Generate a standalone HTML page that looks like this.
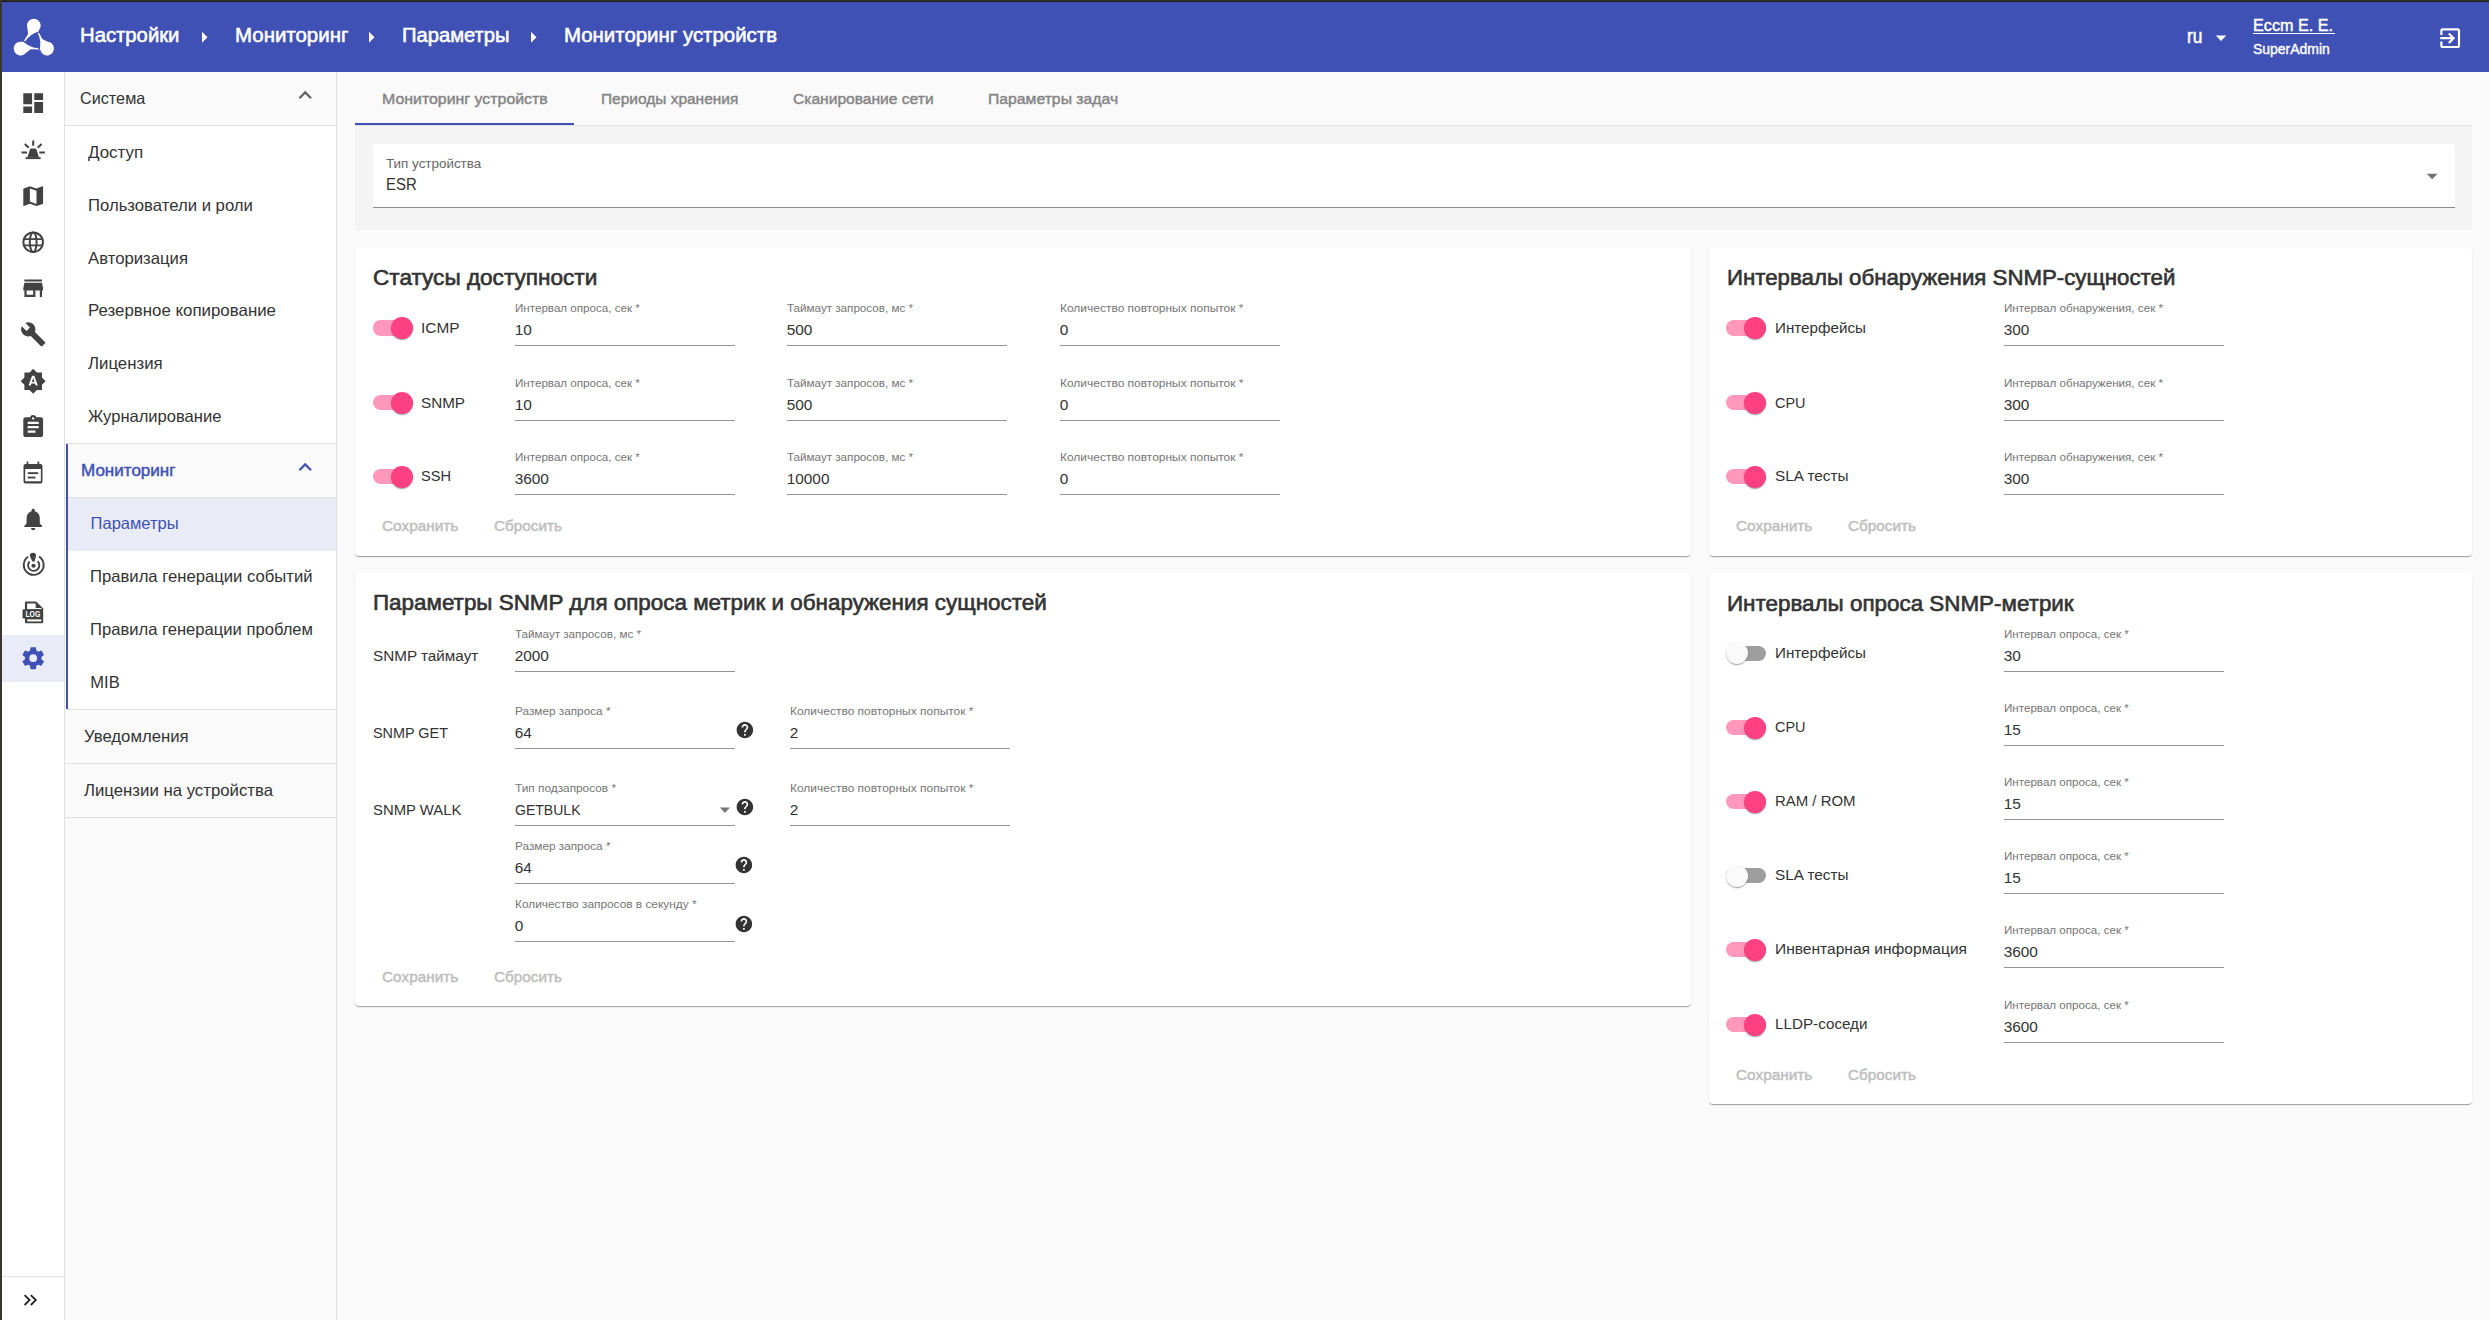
<!DOCTYPE html><html><head><meta charset="utf-8"><style>html,body{margin:0;padding:0;width:2489px;height:1320px;overflow:hidden;}body{position:relative;font-family:"Liberation Sans", sans-serif;}</style></head><body><div style="position:absolute;left:0px;top:0px;width:2489px;height:1320px;background:#fafafa;"></div>
<div style="position:absolute;left:0px;top:0px;width:2489px;height:72px;background:#3f51b5;"></div>
<div style="position:absolute;left:0px;top:0px;width:2489px;height:1px;background:#303030;"></div>
<div style="position:absolute;left:0px;top:1px;width:2489px;height:1px;background:#1b1a16;"></div>
<div style="position:absolute;left:2px;top:72px;width:62px;height:1248px;background:#ffffff;"></div>
<div style="position:absolute;left:64px;top:72px;width:1px;height:1248px;background:#e0e0e0;"></div>
<div style="position:absolute;left:2px;top:635px;width:62px;height:47px;background:#e9ecf6;"></div>
<div style="position:absolute;left:2px;top:1276px;width:62px;height:1px;background:#e0e0e0;"></div>
<div style="position:absolute;left:65px;top:72px;width:271px;height:1248px;background:#fafafa;"></div>
<div style="position:absolute;left:336px;top:72px;width:1px;height:1248px;background:#e0e0e0;"></div>
<div style="position:absolute;left:0px;top:0px;width:1px;height:1320px;background:#3a3632;"></div>
<div style="position:absolute;left:1px;top:0px;width:1px;height:1320px;background:#3d3428;"></div>
<svg style="position:absolute;left:0;top:0" width="70" height="70" viewBox="0 0 70 70" fill="#fff"><g transform="translate(33.8 40.9)"><g transform="rotate(0)"><circle cx="0" cy="-15.3" r="6.9"/><path d="M-6.3 -12.6 L-5.7 -6.8 L-9.8 -0.1 L-8.5 0.3 Q-4.8 -6.4 5.7 -10 Z"/></g><g transform="rotate(120)"><circle cx="0" cy="-15.3" r="6.9"/><path d="M-6.3 -12.6 L-5.7 -6.8 L-9.8 -0.1 L-8.5 0.3 Q-4.8 -6.4 5.7 -10 Z"/></g><g transform="rotate(240)"><circle cx="0" cy="-15.3" r="6.9"/><path d="M-6.3 -12.6 L-5.7 -6.8 L-9.8 -0.1 L-8.5 0.3 Q-4.8 -6.4 5.7 -10 Z"/></g></g></svg>
<div id="t0" style="position:absolute;left:80px;top:26.37px;font-size:19.80px;line-height:1;white-space:nowrap;color:#fff;font-weight:400;-webkit-text-stroke:0.55px #fff;transform:scaleX(1.0247);transform-origin:0 0;">Настройки</div>
<div id="t1" style="position:absolute;left:234.5px;top:26.37px;font-size:19.80px;line-height:1;white-space:nowrap;color:#fff;font-weight:400;-webkit-text-stroke:0.55px #fff;transform:scaleX(1.0336);transform-origin:0 0;">Мониторинг</div>
<div id="t2" style="position:absolute;left:401.6px;top:26.37px;font-size:19.80px;line-height:1;white-space:nowrap;color:#fff;font-weight:400;-webkit-text-stroke:0.55px #fff;transform:scaleX(1.0194);transform-origin:0 0;">Параметры</div>
<div id="t3" style="position:absolute;left:564.2px;top:26.37px;font-size:19.80px;line-height:1;white-space:nowrap;color:#fff;font-weight:400;-webkit-text-stroke:0.55px #fff;transform:scaleX(1.0323);transform-origin:0 0;">Мониторинг устройств</div>
<svg style="position:absolute;left:191px;top:24.05px" width="26.4" height="26.4" viewBox="0 0 24 24" fill="#fff"><path d="M10 17l5-5-5-5v10z"/></svg>
<svg style="position:absolute;left:358.2px;top:24.05px" width="26.4" height="26.4" viewBox="0 0 24 24" fill="#fff"><path d="M10 17l5-5-5-5v10z"/></svg>
<svg style="position:absolute;left:520.3px;top:24.05px" width="26.4" height="26.4" viewBox="0 0 24 24" fill="#fff"><path d="M10 17l5-5-5-5v10z"/></svg>
<div id="t4" style="position:absolute;left:2186.6px;top:27.41px;font-size:19.40px;line-height:1;white-space:nowrap;color:#fff;font-weight:400;-webkit-text-stroke:0.54px #fff;transform:scaleX(0.8928);transform-origin:0 0;">ru</div>
<svg style="position:absolute;left:0;top:0" width="2489" height="72"><polygon points="2215.8,35.6 2226.3,35.6 2221.05,41.1" fill="#fff"/></svg>
<div id="t5" style="position:absolute;left:2252.6px;top:18.09px;font-size:16.60px;line-height:1;white-space:nowrap;color:#fff;font-weight:400;-webkit-text-stroke:0.46px #fff;transform:scaleX(0.9749);transform-origin:0 0;">Eccm E. E.</div>
<div style="position:absolute;left:2252.5px;top:33px;width:82px;height:1.2px;background:#fff;"></div>
<div id="t6" style="position:absolute;left:2253px;top:41.55px;font-size:14.30px;line-height:1;white-space:nowrap;color:#fff;font-weight:400;-webkit-text-stroke:0.40px #fff;transform:scaleX(0.9760);transform-origin:0 0;">SuperAdmin</div>
<svg style="position:absolute;left:2437.3px;top:24.65px" width="26.4" height="26.4" viewBox="0 0 24 24" fill="#fff"><path d="M10.09 15.59L11.5 17l5-5-5-5-1.41 1.41L12.67 11H3v2h9.67l-2.58 2.59zM19 3H5c-1.11 0-2 .9-2 2v4h2V5h14v14H5v-4H3v4c0 1.1.89 2 2 2h14c1.1 0 2-.9 2-2V5c0-1.1-.9-2-2-2z"/></svg>
<svg style="position:absolute;left:19.6px;top:90.4px" width="26.4" height="26.4" viewBox="0 0 24 24" fill="#424242"><path d="M3 13h8V3H3v10zm0 8h8v-6H3v6zm10 0h8V11h-8v10zm0-18v6h8V3h-8z"/></svg>
<svg style="position:absolute;left:19.6px;top:136.6px" width="26.4" height="26.4" viewBox="0 0 24 24" fill="#424242"><g stroke="#424242" stroke-width="1.8" fill="none"><path d="M12 3.1v4.9M4.4 6.4l3.5 3.4M19.6 6.4l-3.5 3.4M1.4 14.1h5M17.6 14.1h5"/></g><path d="M10.2 10.4h3.6q0.9 0 1.2 0.9L17.2 18.4H6.8L9 11.3q0.3-0.9 1.2-0.9z"/><rect x="5.2" y="18.3" width="13.6" height="1.8"/></svg>
<svg style="position:absolute;left:19.6px;top:182.8px" width="26.4" height="26.4" viewBox="0 0 24 24" fill="#424242"><path d="M20.5 3l-.16.03L15 5.1 9 3 3.36 4.9c-.21.07-.36.25-.36.48V20.5c0 .28.22.5.5.5l.16-.03L9 18.9l6 2.1 5.64-1.9c.21-.07.36-.25.36-.48V3.5c0-.28-.22-.5-.5-.5zM15 19l-6-2.11V5l6 2.11V19z"/></svg>
<svg style="position:absolute;left:19.6px;top:229.0px" width="26.4" height="26.4" viewBox="0 0 24 24" fill="#424242"><g stroke="#424242" stroke-width="1.8" fill="none"><circle cx="12" cy="12" r="8.9"/><ellipse cx="12" cy="12" rx="3.1" ry="8.9"/><path d="M3.3 9.2h17.4M3.3 14.9h17.4"/></g></svg>
<svg style="position:absolute;left:19.6px;top:275.2px" width="26.4" height="26.4" viewBox="0 0 24 24" fill="#424242"><path d="M20 4H4v2h16V4zm1 10v-2l-1-5H4l-1 5v2h1v6h10v-6h4v6h2v-6h1zm-9 4H6v-4h6v4z"/></svg>
<svg style="position:absolute;left:19.6px;top:321.4px" width="26.4" height="26.4" viewBox="0 0 24 24" fill="#424242"><path d="M22.7 19l-9.1-9.1c.9-2.3.4-5-1.5-6.9-2-2-5-2.4-7.4-1.3L9 6 6 9 1.6 4.7C.4 7.1.9 10.1 2.9 12.1c1.9 1.9 4.6 2.4 6.9 1.5l9.1 9.1c.4.4 1 .4 1.4 0l2.3-2.3c.5-.4.5-1.1.1-1.4z"/></svg>
<svg style="position:absolute;left:19.6px;top:367.6px" width="26.4" height="26.4" viewBox="0 0 24 24" fill="#424242"><path d="M10.85 12.65h2.3L12 9l-1.15 3.65zM20 8.69V4h-4.69L12 .69 8.69 4H4v4.69L.69 12 4 15.31V20h4.69L12 23.31 15.31 20H20v-4.69L23.31 12 20 8.69zM14.3 16l-.7-2h-3.2l-.7 2H7.8L11 7h2l3.2 9h-1.9z"/></svg>
<svg style="position:absolute;left:19.6px;top:413.8px" width="26.4" height="26.4" viewBox="0 0 24 24" fill="#424242"><path d="M19 3h-4.18C14.4 1.840 13.3 1 12 1c-1.3 0-2.4.84-2.82 2H5c-1.1 0-2 .9-2 2v14c0 1.1.9 2 2 2h14c1.1 0 2-.9 2-2V5c0-1.1-.9-2-2-2zm-7 0c.55 0 1 .45 1 1s-.45 1-1 1-1-.45-1-1 .45-1 1-1zm2 14H7v-2h7v2zm3-4H7v-2h10v2zm0-4H7V7h10v2z"/></svg>
<svg style="position:absolute;left:19.6px;top:460.0px" width="26.4" height="26.4" viewBox="0 0 24 24" fill="#424242"><path fill-rule="evenodd" d="M5 3.55H18.65Q20.45 3.55 20.45 5.35V19.6Q20.45 21.4 18.65 21.4H5Q3.2 21.4 3.2 19.6V5.35Q3.2 3.55 5 3.55ZM4.7 8.2V19.4H18.95V8.2Z"/><rect x="6" y="1.4" width="1.6" height="2.4"/><rect x="15.9" y="1.4" width="1.6" height="2.4"/><rect x="7" y="11.1" width="9.5" height="1.7"/><rect x="7" y="15.1" width="7" height="1.7"/></svg>
<svg style="position:absolute;left:19.6px;top:506.2px" width="26.4" height="26.4" viewBox="0 0 24 24" fill="#424242"><path d="M12 22c1.1 0 2-.9 2-2h-4c0 1.1.89 2 2 2zm6-6v-5c0-3.07-1.64-5.64-4.5-6.32V4c0-.83-.67-1.5-1.5-1.5s-1.5.67-1.5 1.5v.68C7.630 5.36 6 7.92 6 11v5l-2 2v1h16v-1l-2-2z"/></svg>
<svg style="position:absolute;left:19.6px;top:552.4px" width="26.4" height="26.4" viewBox="0 0 24 24" fill="#424242"><g stroke="#424242" stroke-width="1.7" fill="none"><path d="M7.36 4.32A9.05 9.05 0 1 0 17.36 4.2"/><path d="M8.73 8.54A5.1 5.1 0 1 0 15.9 8.27"/></g><circle cx="12.27" cy="12.5" r="1.9"/><path d="M8.9 3.3Q8.9 0.64 11.75 0.64Q14.6 0.64 14.6 3.3L13.3 8.64H11.2Z"/></svg>
<svg style="position:absolute;left:19.6px;top:598.6px" width="26.4" height="26.4" viewBox="0 0 24 24" fill="#424242"><path d="M5.6 2.36H14.8L21.1 8.6V21Q21.1 22.1 20 22.1H5.6Q4.5 22.1 4.5 21V3.46Q4.5 2.36 5.6 2.36Z"/><path fill="#fff" d="M6.45 4.1H14.25V8.1H19.45V9.4H6.45Z"/><rect fill="#fff" x="6.5" y="18.55" width="12.95" height="1.85"/><path d="M3.4 9.3H19.5V17.8H3.4Q2.3 17.8 2.3 16.7V10.4Q2.3 9.3 3.4 9.3Z"/><text x="4.9" y="16.5" fill="#fff" font-family="Liberation Sans" font-weight="700" font-size="7.7" textLength="13.6" lengthAdjust="spacingAndGlyphs">LOG</text></svg>
<svg style="position:absolute;left:19.6px;top:644.8px" width="26.4" height="26.4" viewBox="0 0 24 24" fill="#3f51b5"><path d="M12,15.5A3.5,3.5 0 0,1 8.5,12A3.5,3.5 0 0,1 12,8.5A3.5,3.5 0 0,1 15.5,12A3.5,3.5 0 0,1 12,15.5M19.43,12.97C19.47,12.65 19.5,12.33 19.5,12C19.5,11.67 19.47,11.34 19.43,11L21.54,9.37C21.73,9.22 21.78,8.95 21.66,8.73L19.66,5.27C19.54,5.05 19.27,4.96 19.05,5.05L16.56,6.05C16.04,5.66 15.5,5.32 14.87,5.07L14.5,2.42C14.46,2.18 14.25,2 14,2H10C9.75,2 9.54,2.18 9.5,2.42L9.13,5.07C8.5,5.32 7.96,5.66 7.44,6.05L4.95,5.05C4.73,4.96 4.46,5.05 4.34,5.27L2.34,8.73C2.21,8.95 2.27,9.22 2.46,9.37L4.57,11C4.53,11.34 4.5,11.67 4.5,12C4.5,12.33 4.53,12.650 4.57,12.97L2.46,14.63C2.27,14.78 2.21,15.05 2.34,15.27L4.34,18.73C4.46,18.95 4.73,19.03 4.95,18.95L7.44,17.94C7.96,18.34 8.5,18.68 9.13,18.93L9.5,21.58C9.54,21.82 9.75,22 10,22H14C14.25,22 14.46,21.82 14.5,21.58L14.87,18.93C15.5,18.67 16.04,18.34 16.56,17.94L19.05,18.95C19.27,19.03 19.54,18.95 19.66,18.73L21.66,15.27C21.78,15.05 21.73,14.78 21.54,14.63L19.43,12.97Z"/></svg>
<svg style="position:absolute;left:0;top:1280" width="64" height="40"><g stroke="#222" stroke-width="1.8" fill="none"><path d="M24.6 15.2L29.6 20.1L24.6 25"/><path d="M30.8 15.2L35.8 20.1L30.8 25"/></g></svg>
<div style="position:absolute;left:65px;top:126px;width:271px;height:317px;background:#ffffff;"></div>
<div style="position:absolute;left:65px;top:125px;width:271px;height:1px;background:#e0e0e0;"></div>
<div style="position:absolute;left:65px;top:443px;width:271px;height:1px;background:#e0e0e0;"></div>
<div style="position:absolute;left:65px;top:497px;width:271px;height:1px;background:#e0e0e0;"></div>
<div style="position:absolute;left:68px;top:498px;width:268px;height:211px;background:#ffffff;"></div>
<div style="position:absolute;left:68px;top:498px;width:268px;height:53px;background:#e9ecf6;"></div>
<div style="position:absolute;left:65px;top:709px;width:271px;height:1px;background:#e0e0e0;"></div>
<div style="position:absolute;left:65px;top:763px;width:271px;height:1px;background:#e0e0e0;"></div>
<div style="position:absolute;left:65px;top:817px;width:271px;height:1px;background:#e0e0e0;"></div>
<div style="position:absolute;left:66px;top:444px;width:2.2px;height:265px;background:#3f51b5;"></div>
<div id="t7" style="position:absolute;left:79.5px;top:89.88px;font-size:16.50px;line-height:1;white-space:nowrap;color:#333333;font-weight:400;transform:scaleX(0.9826);transform-origin:0 0;">Система</div>
<svg style="position:absolute;left:291.9px;top:82.1px" width="26.4" height="26.4" viewBox="0 0 24 24" fill="#616161"><path d="M12 8l-6 6 1.41 1.41L12 10.83l4.59 4.58L18 14z"/></svg>
<div id="t8" style="position:absolute;left:88px;top:143.97px;font-size:16.50px;line-height:1;white-space:nowrap;color:#333333;font-weight:400;transform:scaleX(1.0276);transform-origin:0 0;">Доступ</div>
<div id="t9" style="position:absolute;left:88px;top:196.78px;font-size:16.50px;line-height:1;white-space:nowrap;color:#333333;font-weight:400;transform:scaleX(1.0121);transform-origin:0 0;">Пользователи и роли</div>
<div id="t10" style="position:absolute;left:88px;top:249.58px;font-size:16.50px;line-height:1;white-space:nowrap;color:#333333;font-weight:400;transform:scaleX(1.0131);transform-origin:0 0;">Авторизация</div>
<div id="t11" style="position:absolute;left:88px;top:302.38px;font-size:16.50px;line-height:1;white-space:nowrap;color:#333333;font-weight:400;transform:scaleX(1.0217);transform-origin:0 0;">Резервное копирование</div>
<div id="t12" style="position:absolute;left:88px;top:355.18px;font-size:16.50px;line-height:1;white-space:nowrap;color:#333333;font-weight:400;transform:scaleX(1.0187);transform-origin:0 0;">Лицензия</div>
<div id="t13" style="position:absolute;left:88px;top:407.98px;font-size:16.50px;line-height:1;white-space:nowrap;color:#333333;font-weight:400;transform:scaleX(1.0027);transform-origin:0 0;">Журналирование</div>
<div id="t14" style="position:absolute;left:81.4px;top:462.18px;font-size:16.50px;line-height:1;white-space:nowrap;color:#3f51b5;font-weight:400;-webkit-text-stroke:0.46px #3f51b5;transform:scaleX(1.0326);transform-origin:0 0;">Мониторинг</div>
<svg style="position:absolute;left:292.3px;top:453.9px" width="26.4" height="26.4" viewBox="0 0 24 24" fill="#3f51b5"><path d="M12 8l-6 6 1.41 1.41L12 10.83l4.59 4.58L18 14z"/></svg>
<div id="t15" style="position:absolute;left:90.6px;top:515.38px;font-size:16.50px;line-height:1;white-space:nowrap;color:#3f51b5;font-weight:400;">Параметры</div>
<div id="t16" style="position:absolute;left:90.2px;top:568.18px;font-size:16.50px;line-height:1;white-space:nowrap;color:#333333;font-weight:400;transform:scaleX(1.0093);transform-origin:0 0;">Правила генерации событий</div>
<div id="t17" style="position:absolute;left:90.2px;top:620.98px;font-size:16.50px;line-height:1;white-space:nowrap;color:#333333;font-weight:400;transform:scaleX(1.0060);transform-origin:0 0;">Правила генерации проблем</div>
<div id="t18" style="position:absolute;left:90.3px;top:673.77px;font-size:16.50px;line-height:1;white-space:nowrap;color:#333333;font-weight:400;">MIB</div>
<div id="t19" style="position:absolute;left:84.2px;top:727.77px;font-size:16.50px;line-height:1;white-space:nowrap;color:#333333;font-weight:400;transform:scaleX(1.0138);transform-origin:0 0;">Уведомления</div>
<div id="t20" style="position:absolute;left:84.2px;top:781.58px;font-size:16.50px;line-height:1;white-space:nowrap;color:#333333;font-weight:400;transform:scaleX(1.0158);transform-origin:0 0;">Лицензии на устройства</div>
<div id="t21" style="position:absolute;left:381.8px;top:91.11px;font-size:15.40px;line-height:1;white-space:nowrap;color:#858585;font-weight:400;-webkit-text-stroke:0.43px #858585;transform:scaleX(1.0327);transform-origin:0 0;">Мониторинг устройств</div>
<div id="t22" style="position:absolute;left:601.2px;top:91.11px;font-size:15.40px;line-height:1;white-space:nowrap;color:#858585;font-weight:400;-webkit-text-stroke:0.43px #858585;transform:scaleX(1.0049);transform-origin:0 0;">Периоды хранения</div>
<div id="t23" style="position:absolute;left:792.7px;top:91.11px;font-size:15.40px;line-height:1;white-space:nowrap;color:#858585;font-weight:400;-webkit-text-stroke:0.43px #858585;transform:scaleX(1.0125);transform-origin:0 0;">Сканирование сети</div>
<div id="t24" style="position:absolute;left:987.5px;top:91.11px;font-size:15.40px;line-height:1;white-space:nowrap;color:#858585;font-weight:400;-webkit-text-stroke:0.43px #858585;transform:scaleX(1.0232);transform-origin:0 0;">Параметры задач</div>
<div style="position:absolute;left:355px;top:125px;width:2117px;height:1px;background:#e0e0e0;"></div>
<div style="position:absolute;left:355px;top:123px;width:219px;height:2.2px;background:#3f51b5;"></div>
<div style="position:absolute;left:355px;top:126px;width:2117px;height:104px;background:#f4f4f4;"></div>
<div style="position:absolute;left:373px;top:144px;width:2082px;height:64px;background:#ffffff;border-radius:4px 4px 0 0"></div>
<div style="position:absolute;left:373px;top:207px;width:2082px;height:1px;background:#8c8c8c;"></div>
<div id="t25" style="position:absolute;left:386px;top:156.78px;font-size:13.20px;line-height:1;white-space:nowrap;color:#666666;font-weight:400;transform:scaleX(1.0172);transform-origin:0 0;">Тип устройства</div>
<div id="t26" style="position:absolute;left:386px;top:175.98px;font-size:17.20px;line-height:1;white-space:nowrap;color:#333333;font-weight:400;transform:scaleX(0.8686);transform-origin:0 0;">ESR</div>
<svg style="position:absolute;left:2400px;top:160px" width="50" height="30"><polygon points="26.6,13.8 37.6,13.8 32.1,19.3" fill="#757575"/></svg>
<div style="position:absolute;left:355px;top:248px;width:1336px;height:308px;background:#fff;border-radius:4px;box-shadow:0 2px 1px -1px rgba(0,0,0,.2),0 1px 1px 0 rgba(0,0,0,.14),0 1px 2px 0 rgba(0,0,0,.08)"></div>
<div style="position:absolute;left:1709px;top:248px;width:763px;height:308px;background:#fff;border-radius:4px;box-shadow:0 2px 1px -1px rgba(0,0,0,.2),0 1px 1px 0 rgba(0,0,0,.14),0 1px 2px 0 rgba(0,0,0,.08)"></div>
<div style="position:absolute;left:355px;top:573px;width:1336px;height:433px;background:#fff;border-radius:4px;box-shadow:0 2px 1px -1px rgba(0,0,0,.2),0 1px 1px 0 rgba(0,0,0,.14),0 1px 2px 0 rgba(0,0,0,.08)"></div>
<div style="position:absolute;left:1709px;top:573px;width:763px;height:531px;background:#fff;border-radius:4px;box-shadow:0 2px 1px -1px rgba(0,0,0,.2),0 1px 1px 0 rgba(0,0,0,.14),0 1px 2px 0 rgba(0,0,0,.08)"></div>
<div id="t27" style="position:absolute;left:373px;top:267.30px;font-size:22.00px;line-height:1;white-space:nowrap;color:#333333;font-weight:400;-webkit-text-stroke:0.62px #333333;transform:scaleX(1.0264);transform-origin:0 0;">Статусы доступности</div>
<div style="position:absolute;left:373px;top:320.2px;width:39.6px;height:15.4px;background:#ff98bb;border-radius:7.7px"></div>
<div style="position:absolute;left:390.7px;top:316.9px;width:22px;height:22px;background:#ff4081;border-radius:50%;box-shadow:0 2px 1px -1px rgba(0,0,0,.2),0 1px 1px 0 rgba(0,0,0,.14),0 1px 3px 0 rgba(0,0,0,.12)"></div>
<div id="t28" style="position:absolute;left:421px;top:319.61px;font-size:15.40px;line-height:1;white-space:nowrap;color:#333333;font-weight:400;">ICMP</div>
<div id="t29" style="position:absolute;left:515px;top:303.28px;font-size:11.55px;line-height:1;white-space:nowrap;color:#757575;font-weight:400;transform:scaleX(1.0053);transform-origin:0 0;">Интервал опроса, сек *</div>
<div id="t30" style="position:absolute;left:514.7px;top:322.41px;font-size:15.40px;line-height:1;white-space:nowrap;color:#333333;font-weight:400;">10</div>
<div style="position:absolute;left:515px;top:345.4px;width:220px;height:1px;background:#949494;"></div>
<div id="t31" style="position:absolute;left:787px;top:303.28px;font-size:11.55px;line-height:1;white-space:nowrap;color:#757575;font-weight:400;transform:scaleX(1.0079);transform-origin:0 0;">Таймаут запросов, мс *</div>
<div id="t32" style="position:absolute;left:786.7px;top:322.41px;font-size:15.40px;line-height:1;white-space:nowrap;color:#333333;font-weight:400;">500</div>
<div style="position:absolute;left:787px;top:345.4px;width:220px;height:1px;background:#949494;"></div>
<div id="t33" style="position:absolute;left:1060px;top:303.28px;font-size:11.55px;line-height:1;white-space:nowrap;color:#757575;font-weight:400;transform:scaleX(1.0367);transform-origin:0 0;">Количество повторных попыток *</div>
<div id="t34" style="position:absolute;left:1059.7px;top:322.41px;font-size:15.40px;line-height:1;white-space:nowrap;color:#333333;font-weight:400;">0</div>
<div style="position:absolute;left:1060px;top:345.4px;width:220px;height:1px;background:#949494;"></div>
<div style="position:absolute;left:373px;top:395.1px;width:39.6px;height:15.4px;background:#ff98bb;border-radius:7.7px"></div>
<div style="position:absolute;left:390.7px;top:391.8px;width:22px;height:22px;background:#ff4081;border-radius:50%;box-shadow:0 2px 1px -1px rgba(0,0,0,.2),0 1px 1px 0 rgba(0,0,0,.14),0 1px 3px 0 rgba(0,0,0,.12)"></div>
<div id="t35" style="position:absolute;left:421px;top:394.51px;font-size:15.40px;line-height:1;white-space:nowrap;color:#333333;font-weight:400;transform:scaleX(0.9895);transform-origin:0 0;">SNMP</div>
<div id="t36" style="position:absolute;left:515px;top:378.18px;font-size:11.55px;line-height:1;white-space:nowrap;color:#757575;font-weight:400;transform:scaleX(1.0053);transform-origin:0 0;">Интервал опроса, сек *</div>
<div id="t37" style="position:absolute;left:514.7px;top:397.31px;font-size:15.40px;line-height:1;white-space:nowrap;color:#333333;font-weight:400;">10</div>
<div style="position:absolute;left:515px;top:420.3px;width:220px;height:1px;background:#949494;"></div>
<div id="t38" style="position:absolute;left:787px;top:378.18px;font-size:11.55px;line-height:1;white-space:nowrap;color:#757575;font-weight:400;transform:scaleX(1.0079);transform-origin:0 0;">Таймаут запросов, мс *</div>
<div id="t39" style="position:absolute;left:786.7px;top:397.31px;font-size:15.40px;line-height:1;white-space:nowrap;color:#333333;font-weight:400;">500</div>
<div style="position:absolute;left:787px;top:420.3px;width:220px;height:1px;background:#949494;"></div>
<div id="t40" style="position:absolute;left:1060px;top:378.18px;font-size:11.55px;line-height:1;white-space:nowrap;color:#757575;font-weight:400;transform:scaleX(1.0367);transform-origin:0 0;">Количество повторных попыток *</div>
<div id="t41" style="position:absolute;left:1059.7px;top:397.31px;font-size:15.40px;line-height:1;white-space:nowrap;color:#333333;font-weight:400;">0</div>
<div style="position:absolute;left:1060px;top:420.3px;width:220px;height:1px;background:#949494;"></div>
<div style="position:absolute;left:373px;top:469.0px;width:39.6px;height:15.4px;background:#ff98bb;border-radius:7.7px"></div>
<div style="position:absolute;left:390.7px;top:465.7px;width:22px;height:22px;background:#ff4081;border-radius:50%;box-shadow:0 2px 1px -1px rgba(0,0,0,.2),0 1px 1px 0 rgba(0,0,0,.14),0 1px 3px 0 rgba(0,0,0,.12)"></div>
<div id="t42" style="position:absolute;left:421px;top:468.41px;font-size:15.40px;line-height:1;white-space:nowrap;color:#333333;font-weight:400;transform:scaleX(0.9477);transform-origin:0 0;">SSH</div>
<div id="t43" style="position:absolute;left:515px;top:452.08px;font-size:11.55px;line-height:1;white-space:nowrap;color:#757575;font-weight:400;transform:scaleX(1.0053);transform-origin:0 0;">Интервал опроса, сек *</div>
<div id="t44" style="position:absolute;left:514.7px;top:471.21px;font-size:15.40px;line-height:1;white-space:nowrap;color:#333333;font-weight:400;">3600</div>
<div style="position:absolute;left:515px;top:494.2px;width:220px;height:1px;background:#949494;"></div>
<div id="t45" style="position:absolute;left:787px;top:452.08px;font-size:11.55px;line-height:1;white-space:nowrap;color:#757575;font-weight:400;transform:scaleX(1.0079);transform-origin:0 0;">Таймаут запросов, мс *</div>
<div id="t46" style="position:absolute;left:786.7px;top:471.21px;font-size:15.40px;line-height:1;white-space:nowrap;color:#333333;font-weight:400;">10000</div>
<div style="position:absolute;left:787px;top:494.2px;width:220px;height:1px;background:#949494;"></div>
<div id="t47" style="position:absolute;left:1060px;top:452.08px;font-size:11.55px;line-height:1;white-space:nowrap;color:#757575;font-weight:400;transform:scaleX(1.0367);transform-origin:0 0;">Количество повторных попыток *</div>
<div id="t48" style="position:absolute;left:1059.7px;top:471.21px;font-size:15.40px;line-height:1;white-space:nowrap;color:#333333;font-weight:400;">0</div>
<div style="position:absolute;left:1060px;top:494.2px;width:220px;height:1px;background:#949494;"></div>
<div id="t49" style="position:absolute;left:382px;top:517.91px;font-size:15.40px;line-height:1;white-space:nowrap;color:#bdbdbd;font-weight:400;-webkit-text-stroke:0.43px #bdbdbd;transform:scaleX(0.9976);transform-origin:0 0;">Сохранить</div>
<div id="t50" style="position:absolute;left:494.3px;top:517.91px;font-size:15.40px;line-height:1;white-space:nowrap;color:#bdbdbd;font-weight:400;-webkit-text-stroke:0.43px #bdbdbd;transform:scaleX(0.9924);transform-origin:0 0;">Сбросить</div>
<div id="t51" style="position:absolute;left:1726.7px;top:267.30px;font-size:22.00px;line-height:1;white-space:nowrap;color:#333333;font-weight:400;-webkit-text-stroke:0.62px #333333;transform:scaleX(1.0113);transform-origin:0 0;">Интервалы обнаружения SNMP-сущностей</div>
<div style="position:absolute;left:1726.2px;top:320.2px;width:39.6px;height:15.4px;background:#ff98bb;border-radius:7.7px"></div>
<div style="position:absolute;left:1743.9px;top:316.9px;width:22px;height:22px;background:#ff4081;border-radius:50%;box-shadow:0 2px 1px -1px rgba(0,0,0,.2),0 1px 1px 0 rgba(0,0,0,.14),0 1px 3px 0 rgba(0,0,0,.12)"></div>
<div id="t52" style="position:absolute;left:1775px;top:319.61px;font-size:15.40px;line-height:1;white-space:nowrap;color:#333333;font-weight:400;transform:scaleX(0.9876);transform-origin:0 0;">Интерфейсы</div>
<div id="t53" style="position:absolute;left:2004px;top:303.28px;font-size:11.55px;line-height:1;white-space:nowrap;color:#757575;font-weight:400;transform:scaleX(1.0084);transform-origin:0 0;">Интервал обнаружения, сек *</div>
<div id="t54" style="position:absolute;left:2003.7px;top:322.41px;font-size:15.40px;line-height:1;white-space:nowrap;color:#333333;font-weight:400;">300</div>
<div style="position:absolute;left:2004px;top:345.4px;width:220px;height:1px;background:#949494;"></div>
<div style="position:absolute;left:1726.2px;top:395.1px;width:39.6px;height:15.4px;background:#ff98bb;border-radius:7.7px"></div>
<div style="position:absolute;left:1743.9px;top:391.8px;width:22px;height:22px;background:#ff4081;border-radius:50%;box-shadow:0 2px 1px -1px rgba(0,0,0,.2),0 1px 1px 0 rgba(0,0,0,.14),0 1px 3px 0 rgba(0,0,0,.12)"></div>
<div id="t55" style="position:absolute;left:1775px;top:394.51px;font-size:15.40px;line-height:1;white-space:nowrap;color:#333333;font-weight:400;transform:scaleX(0.9385);transform-origin:0 0;">CPU</div>
<div id="t56" style="position:absolute;left:2004px;top:378.18px;font-size:11.55px;line-height:1;white-space:nowrap;color:#757575;font-weight:400;transform:scaleX(1.0084);transform-origin:0 0;">Интервал обнаружения, сек *</div>
<div id="t57" style="position:absolute;left:2003.7px;top:397.31px;font-size:15.40px;line-height:1;white-space:nowrap;color:#333333;font-weight:400;">300</div>
<div style="position:absolute;left:2004px;top:420.3px;width:220px;height:1px;background:#949494;"></div>
<div style="position:absolute;left:1726.2px;top:469.0px;width:39.6px;height:15.4px;background:#ff98bb;border-radius:7.7px"></div>
<div style="position:absolute;left:1743.9px;top:465.7px;width:22px;height:22px;background:#ff4081;border-radius:50%;box-shadow:0 2px 1px -1px rgba(0,0,0,.2),0 1px 1px 0 rgba(0,0,0,.14),0 1px 3px 0 rgba(0,0,0,.12)"></div>
<div id="t58" style="position:absolute;left:1775px;top:468.41px;font-size:15.40px;line-height:1;white-space:nowrap;color:#333333;font-weight:400;transform:scaleX(0.9964);transform-origin:0 0;">SLA тесты</div>
<div id="t59" style="position:absolute;left:2004px;top:452.08px;font-size:11.55px;line-height:1;white-space:nowrap;color:#757575;font-weight:400;transform:scaleX(1.0084);transform-origin:0 0;">Интервал обнаружения, сек *</div>
<div id="t60" style="position:absolute;left:2003.7px;top:471.21px;font-size:15.40px;line-height:1;white-space:nowrap;color:#333333;font-weight:400;">300</div>
<div style="position:absolute;left:2004px;top:494.2px;width:220px;height:1px;background:#949494;"></div>
<div id="t61" style="position:absolute;left:1735.6px;top:517.91px;font-size:15.40px;line-height:1;white-space:nowrap;color:#bdbdbd;font-weight:400;-webkit-text-stroke:0.43px #bdbdbd;transform:scaleX(0.9976);transform-origin:0 0;">Сохранить</div>
<div id="t62" style="position:absolute;left:1847.9px;top:517.91px;font-size:15.40px;line-height:1;white-space:nowrap;color:#bdbdbd;font-weight:400;-webkit-text-stroke:0.43px #bdbdbd;transform:scaleX(0.9924);transform-origin:0 0;">Сбросить</div>
<div id="t63" style="position:absolute;left:373px;top:592.30px;font-size:22.00px;line-height:1;white-space:nowrap;color:#333333;font-weight:400;-webkit-text-stroke:0.62px #333333;transform:scaleX(1.0186);transform-origin:0 0;">Параметры SNMP для опроса метрик и обнаружения сущностей</div>
<div id="t64" style="position:absolute;left:373px;top:647.61px;font-size:15.40px;line-height:1;white-space:nowrap;color:#333333;font-weight:400;transform:scaleX(0.9914);transform-origin:0 0;">SNMP таймаут</div>
<div id="t65" style="position:absolute;left:515px;top:629.08px;font-size:11.55px;line-height:1;white-space:nowrap;color:#757575;font-weight:400;transform:scaleX(1.0079);transform-origin:0 0;">Таймаут запросов, мс *</div>
<div id="t66" style="position:absolute;left:514.7px;top:648.21px;font-size:15.40px;line-height:1;white-space:nowrap;color:#333333;font-weight:400;">2000</div>
<div style="position:absolute;left:515px;top:671.2px;width:220px;height:1px;background:#949494;"></div>
<div id="t67" style="position:absolute;left:373px;top:724.81px;font-size:15.40px;line-height:1;white-space:nowrap;color:#333333;font-weight:400;transform:scaleX(0.9362);transform-origin:0 0;">SNMP GET</div>
<div id="t68" style="position:absolute;left:515px;top:706.18px;font-size:11.55px;line-height:1;white-space:nowrap;color:#757575;font-weight:400;transform:scaleX(1.0202);transform-origin:0 0;">Размер запроса *</div>
<div id="t69" style="position:absolute;left:514.7px;top:725.31px;font-size:15.40px;line-height:1;white-space:nowrap;color:#333333;font-weight:400;">64</div>
<div style="position:absolute;left:515px;top:748.3px;width:220px;height:1px;background:#949494;"></div>
<svg style="position:absolute;left:734.6px;top:719.9px" width="19.8" height="19.8" viewBox="0 0 24 24" fill="#333333"><path d="M12 2C6.48 2 2 6.48 2 12s4.48 10 10 10 10-4.48 10-10S17.52 2 12 2zm1 17h-2v-2h2v2zm2.07-7.75l-.9.92C13.45 12.9 13 13.5 13 15h-2v-.5c0-1.1.45-2.1 1.17-2.83l1.24-1.26c.37-.36.59-.86.59-1.41 0-1.1-.9-2-2-2s-2 .9-2 2H8c0-2.21 1.79-4 4-4s4 1.79 4 4c0 .88-.36 1.68-.93 2.25z"/></svg>
<div id="t70" style="position:absolute;left:790px;top:706.18px;font-size:11.55px;line-height:1;white-space:nowrap;color:#757575;font-weight:400;transform:scaleX(1.0367);transform-origin:0 0;">Количество повторных попыток *</div>
<div id="t71" style="position:absolute;left:789.7px;top:725.31px;font-size:15.40px;line-height:1;white-space:nowrap;color:#333333;font-weight:400;">2</div>
<div style="position:absolute;left:790px;top:748.3px;width:220px;height:1px;background:#949494;"></div>
<div id="t72" style="position:absolute;left:373px;top:802.41px;font-size:15.40px;line-height:1;white-space:nowrap;color:#333333;font-weight:400;transform:scaleX(0.9670);transform-origin:0 0;">SNMP WALK</div>
<div id="t73" style="position:absolute;left:515px;top:783.18px;font-size:11.55px;line-height:1;white-space:nowrap;color:#757575;font-weight:400;transform:scaleX(1.0244);transform-origin:0 0;">Тип подзапросов *</div>
<div id="t74" style="position:absolute;left:514.7px;top:802.31px;font-size:15.40px;line-height:1;white-space:nowrap;color:#333333;font-weight:400;transform:scaleX(0.9117);transform-origin:0 0;">GETBULK</div>
<div style="position:absolute;left:515px;top:825.3px;width:220px;height:1px;background:#949494;"></div>
<svg style="position:absolute;left:700px;top:800px" width="40" height="20"><polygon points="19.9,7.6 30,7.6 24.95,12.9" fill="#757575"/></svg>
<svg style="position:absolute;left:734.8px;top:797.3px" width="19.8" height="19.8" viewBox="0 0 24 24" fill="#333333"><path d="M12 2C6.48 2 2 6.48 2 12s4.48 10 10 10 10-4.48 10-10S17.52 2 12 2zm1 17h-2v-2h2v2zm2.07-7.75l-.9.92C13.45 12.9 13 13.5 13 15h-2v-.5c0-1.1.45-2.1 1.17-2.83l1.24-1.26c.37-.36.59-.86.59-1.41 0-1.1-.9-2-2-2s-2 .9-2 2H8c0-2.21 1.79-4 4-4s4 1.79 4 4c0 .88-.36 1.68-.93 2.25z"/></svg>
<div id="t75" style="position:absolute;left:790px;top:783.18px;font-size:11.55px;line-height:1;white-space:nowrap;color:#757575;font-weight:400;transform:scaleX(1.0367);transform-origin:0 0;">Количество повторных попыток *</div>
<div id="t76" style="position:absolute;left:789.7px;top:802.31px;font-size:15.40px;line-height:1;white-space:nowrap;color:#333333;font-weight:400;">2</div>
<div style="position:absolute;left:790px;top:825.3px;width:220px;height:1px;background:#949494;"></div>
<div id="t77" style="position:absolute;left:515px;top:841.18px;font-size:11.55px;line-height:1;white-space:nowrap;color:#757575;font-weight:400;transform:scaleX(1.0202);transform-origin:0 0;">Размер запроса *</div>
<div id="t78" style="position:absolute;left:514.7px;top:860.31px;font-size:15.40px;line-height:1;white-space:nowrap;color:#333333;font-weight:400;">64</div>
<div style="position:absolute;left:515px;top:883.3px;width:220px;height:1px;background:#949494;"></div>
<svg style="position:absolute;left:734.4px;top:855.4px" width="19.8" height="19.8" viewBox="0 0 24 24" fill="#333333"><path d="M12 2C6.48 2 2 6.48 2 12s4.48 10 10 10 10-4.48 10-10S17.52 2 12 2zm1 17h-2v-2h2v2zm2.07-7.75l-.9.92C13.45 12.9 13 13.5 13 15h-2v-.5c0-1.1.45-2.1 1.17-2.83l1.24-1.26c.37-.36.59-.86.59-1.41 0-1.1-.9-2-2-2s-2 .9-2 2H8c0-2.21 1.79-4 4-4s4 1.79 4 4c0 .88-.36 1.68-.93 2.25z"/></svg>
<div id="t79" style="position:absolute;left:515px;top:898.58px;font-size:11.55px;line-height:1;white-space:nowrap;color:#757575;font-weight:400;transform:scaleX(1.0267);transform-origin:0 0;">Количество запросов в секунду *</div>
<div id="t80" style="position:absolute;left:514.7px;top:917.71px;font-size:15.40px;line-height:1;white-space:nowrap;color:#333333;font-weight:400;">0</div>
<div style="position:absolute;left:515px;top:940.7px;width:220px;height:1px;background:#949494;"></div>
<svg style="position:absolute;left:734.4px;top:914.1px" width="19.8" height="19.8" viewBox="0 0 24 24" fill="#333333"><path d="M12 2C6.48 2 2 6.48 2 12s4.48 10 10 10 10-4.48 10-10S17.52 2 12 2zm1 17h-2v-2h2v2zm2.07-7.75l-.9.92C13.45 12.9 13 13.5 13 15h-2v-.5c0-1.1.45-2.1 1.17-2.83l1.24-1.26c.37-.36.59-.86.59-1.41 0-1.1-.9-2-2-2s-2 .9-2 2H8c0-2.21 1.79-4 4-4s4 1.79 4 4c0 .88-.36 1.68-.93 2.25z"/></svg>
<div id="t81" style="position:absolute;left:382px;top:969.11px;font-size:15.40px;line-height:1;white-space:nowrap;color:#bdbdbd;font-weight:400;-webkit-text-stroke:0.43px #bdbdbd;transform:scaleX(0.9976);transform-origin:0 0;">Сохранить</div>
<div id="t82" style="position:absolute;left:494.3px;top:969.11px;font-size:15.40px;line-height:1;white-space:nowrap;color:#bdbdbd;font-weight:400;-webkit-text-stroke:0.43px #bdbdbd;transform:scaleX(0.9924);transform-origin:0 0;">Сбросить</div>
<div id="t83" style="position:absolute;left:1727px;top:592.80px;font-size:22.00px;line-height:1;white-space:nowrap;color:#333333;font-weight:400;-webkit-text-stroke:0.62px #333333;transform:scaleX(1.0184);transform-origin:0 0;">Интервалы опроса SNMP-метрик</div>
<div style="position:absolute;left:1726.2px;top:645.5999999999999px;width:39.6px;height:15.4px;background:#9e9e9e;border-radius:7.7px"></div>
<div style="position:absolute;left:1726.2px;top:642.3px;width:22px;height:22px;background:#fafafa;border-radius:50%;box-shadow:0 2px 1px -1px rgba(0,0,0,.2),0 1px 1px 0 rgba(0,0,0,.14),0 1px 3px 0 rgba(0,0,0,.12)"></div>
<div id="t84" style="position:absolute;left:1775px;top:645.01px;font-size:15.40px;line-height:1;white-space:nowrap;color:#333333;font-weight:400;transform:scaleX(0.9876);transform-origin:0 0;">Интерфейсы</div>
<div id="t85" style="position:absolute;left:2004px;top:628.68px;font-size:11.55px;line-height:1;white-space:nowrap;color:#757575;font-weight:400;transform:scaleX(1.0053);transform-origin:0 0;">Интервал опроса, сек *</div>
<div id="t86" style="position:absolute;left:2003.7px;top:647.81px;font-size:15.40px;line-height:1;white-space:nowrap;color:#333333;font-weight:400;">30</div>
<div style="position:absolute;left:2004px;top:670.8px;width:220px;height:1px;background:#949494;"></div>
<div style="position:absolute;left:1726.2px;top:719.8px;width:39.6px;height:15.4px;background:#ff98bb;border-radius:7.7px"></div>
<div style="position:absolute;left:1743.9px;top:716.5px;width:22px;height:22px;background:#ff4081;border-radius:50%;box-shadow:0 2px 1px -1px rgba(0,0,0,.2),0 1px 1px 0 rgba(0,0,0,.14),0 1px 3px 0 rgba(0,0,0,.12)"></div>
<div id="t87" style="position:absolute;left:1775px;top:719.21px;font-size:15.40px;line-height:1;white-space:nowrap;color:#333333;font-weight:400;transform:scaleX(0.9385);transform-origin:0 0;">CPU</div>
<div id="t88" style="position:absolute;left:2004px;top:702.88px;font-size:11.55px;line-height:1;white-space:nowrap;color:#757575;font-weight:400;transform:scaleX(1.0053);transform-origin:0 0;">Интервал опроса, сек *</div>
<div id="t89" style="position:absolute;left:2003.7px;top:722.01px;font-size:15.40px;line-height:1;white-space:nowrap;color:#333333;font-weight:400;">15</div>
<div style="position:absolute;left:2004px;top:745px;width:220px;height:1px;background:#949494;"></div>
<div style="position:absolute;left:1726.2px;top:794.0px;width:39.6px;height:15.4px;background:#ff98bb;border-radius:7.7px"></div>
<div style="position:absolute;left:1743.9px;top:790.7px;width:22px;height:22px;background:#ff4081;border-radius:50%;box-shadow:0 2px 1px -1px rgba(0,0,0,.2),0 1px 1px 0 rgba(0,0,0,.14),0 1px 3px 0 rgba(0,0,0,.12)"></div>
<div id="t90" style="position:absolute;left:1775px;top:793.41px;font-size:15.40px;line-height:1;white-space:nowrap;color:#333333;font-weight:400;transform:scaleX(0.9706);transform-origin:0 0;">RAM / ROM</div>
<div id="t91" style="position:absolute;left:2004px;top:777.08px;font-size:11.55px;line-height:1;white-space:nowrap;color:#757575;font-weight:400;transform:scaleX(1.0053);transform-origin:0 0;">Интервал опроса, сек *</div>
<div id="t92" style="position:absolute;left:2003.7px;top:796.21px;font-size:15.40px;line-height:1;white-space:nowrap;color:#333333;font-weight:400;">15</div>
<div style="position:absolute;left:2004px;top:819.2px;width:220px;height:1px;background:#949494;"></div>
<div style="position:absolute;left:1726.2px;top:867.8px;width:39.6px;height:15.4px;background:#9e9e9e;border-radius:7.7px"></div>
<div style="position:absolute;left:1726.2px;top:864.5px;width:22px;height:22px;background:#fafafa;border-radius:50%;box-shadow:0 2px 1px -1px rgba(0,0,0,.2),0 1px 1px 0 rgba(0,0,0,.14),0 1px 3px 0 rgba(0,0,0,.12)"></div>
<div id="t93" style="position:absolute;left:1775px;top:867.21px;font-size:15.40px;line-height:1;white-space:nowrap;color:#333333;font-weight:400;transform:scaleX(0.9964);transform-origin:0 0;">SLA тесты</div>
<div id="t94" style="position:absolute;left:2004px;top:850.88px;font-size:11.55px;line-height:1;white-space:nowrap;color:#757575;font-weight:400;transform:scaleX(1.0053);transform-origin:0 0;">Интервал опроса, сек *</div>
<div id="t95" style="position:absolute;left:2003.7px;top:870.01px;font-size:15.40px;line-height:1;white-space:nowrap;color:#333333;font-weight:400;">15</div>
<div style="position:absolute;left:2004px;top:893px;width:220px;height:1px;background:#949494;"></div>
<div style="position:absolute;left:1726.2px;top:941.8px;width:39.6px;height:15.4px;background:#ff98bb;border-radius:7.7px"></div>
<div style="position:absolute;left:1743.9px;top:938.5px;width:22px;height:22px;background:#ff4081;border-radius:50%;box-shadow:0 2px 1px -1px rgba(0,0,0,.2),0 1px 1px 0 rgba(0,0,0,.14),0 1px 3px 0 rgba(0,0,0,.12)"></div>
<div id="t96" style="position:absolute;left:1775px;top:941.21px;font-size:15.40px;line-height:1;white-space:nowrap;color:#333333;font-weight:400;transform:scaleX(1.0102);transform-origin:0 0;">Инвентарная информация</div>
<div id="t97" style="position:absolute;left:2004px;top:924.88px;font-size:11.55px;line-height:1;white-space:nowrap;color:#757575;font-weight:400;transform:scaleX(1.0053);transform-origin:0 0;">Интервал опроса, сек *</div>
<div id="t98" style="position:absolute;left:2003.7px;top:944.01px;font-size:15.40px;line-height:1;white-space:nowrap;color:#333333;font-weight:400;">3600</div>
<div style="position:absolute;left:2004px;top:967px;width:220px;height:1px;background:#949494;"></div>
<div style="position:absolute;left:1726.2px;top:1016.8px;width:39.6px;height:15.4px;background:#ff98bb;border-radius:7.7px"></div>
<div style="position:absolute;left:1743.9px;top:1013.5px;width:22px;height:22px;background:#ff4081;border-radius:50%;box-shadow:0 2px 1px -1px rgba(0,0,0,.2),0 1px 1px 0 rgba(0,0,0,.14),0 1px 3px 0 rgba(0,0,0,.12)"></div>
<div id="t99" style="position:absolute;left:1775px;top:1016.21px;font-size:15.40px;line-height:1;white-space:nowrap;color:#333333;font-weight:400;transform:scaleX(0.9888);transform-origin:0 0;">LLDP-соседи</div>
<div id="t100" style="position:absolute;left:2004px;top:999.88px;font-size:11.55px;line-height:1;white-space:nowrap;color:#757575;font-weight:400;transform:scaleX(1.0053);transform-origin:0 0;">Интервал опроса, сек *</div>
<div id="t101" style="position:absolute;left:2003.7px;top:1019.01px;font-size:15.40px;line-height:1;white-space:nowrap;color:#333333;font-weight:400;">3600</div>
<div style="position:absolute;left:2004px;top:1042px;width:220px;height:1px;background:#949494;"></div>
<div id="t102" style="position:absolute;left:1735.6px;top:1066.61px;font-size:15.40px;line-height:1;white-space:nowrap;color:#bdbdbd;font-weight:400;-webkit-text-stroke:0.43px #bdbdbd;transform:scaleX(0.9976);transform-origin:0 0;">Сохранить</div>
<div id="t103" style="position:absolute;left:1847.9px;top:1066.61px;font-size:15.40px;line-height:1;white-space:nowrap;color:#bdbdbd;font-weight:400;-webkit-text-stroke:0.43px #bdbdbd;transform:scaleX(0.9924);transform-origin:0 0;">Сбросить</div></body></html>
